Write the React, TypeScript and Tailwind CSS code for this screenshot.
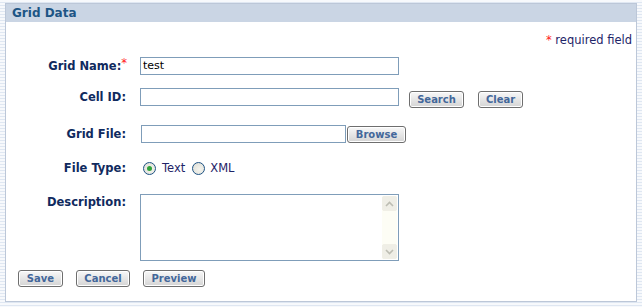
import React from 'react';

const btn =
  'h-[17px] rounded-[3px] border border-[#6e6e6e] bg-[linear-gradient(#f8f8f8,#d4d4d4)] text-[10px] font-bold leading-none text-[#43679a] shadow-[inset_0_0_0_1px_#ffffff]';

const input = 'h-[18px] border border-[#7f9db9] bg-white px-[2px] text-[11px] leading-[16px] text-black';

function Label({ children, required }: { children: React.ReactNode; required?: boolean }) {
  return (
    <div className="w-[121px] shrink-0 text-right text-[11.5px] font-bold leading-[13px] text-[#102a5e]">
      {children}
      {required ? <span className="relative -top-[3px] font-normal text-[#ff2020]">*</span> : <span className="pr-[1px]" />}
    </div>
  );
}

function Radio({ checked }: { checked?: boolean }) {
  return (
    <span className="flex h-[13px] w-[13px] items-center justify-center rounded-full border border-[#1d5283] bg-[radial-gradient(circle_at_60%_60%,#f4f4ee,#dcdcd4)]">
      {checked && <span className="h-[5px] w-[5px] rounded-full bg-[#2fa33a]" />}
    </span>
  );
}

export default function App() {
  return (
    <div className="h-[307px] w-[642px] overflow-hidden bg-[repeating-linear-gradient(#f7f9fc_0_2px,#dfe7f2_2px_3px)] pl-[5px] pt-[3px] font-['DejaVu_Sans',Verdana,sans-serif]">
      <div className="h-[299px] w-[632px] border border-[#bcc7d8] bg-white">
        {/* Header */}
        <div className="h-[18px] bg-[#cad5e4] pl-[6px] text-[12px] font-bold leading-[18px] text-[#1d5585]">
          Grid Data
        </div>

        <div className="flex flex-col">
          <div className="mt-[12px] pr-[4px] text-right text-[11.5px] leading-[13px] text-[#1e2468]">
            <span className="text-[#ff2020]">*</span> required field
          </div>

          {/* Grid Name */}
          <div className="mt-[10px] flex h-[18px] items-center">
            <Label required>Grid Name:</Label>
            <div className={`${input} ml-[13px] w-[259px]`}>test</div>
          </div>

          {/* Cell ID */}
          <div className="mt-[13px] flex h-[20px] items-start">
            <div className="flex h-[18px] items-center">
              <Label>Cell ID:</Label>
            </div>
            <div className={`${input} ml-[13px] w-[259px]`} />
            <button className={`${btn} ml-[10px] mt-[3px] w-[55px]`}>Search</button>
            <button className={`${btn} ml-[14px] mt-[3px] w-[45px]`}>Clear</button>
          </div>

          {/* Grid File */}
          <div className="mt-[17px] flex h-[18px] items-start">
            <div className="flex h-[18px] items-center">
              <Label>Grid File:</Label>
            </div>
            <div className={`${input} ml-[14px] w-[205px]`} />
            <button className={`${btn} ml-[1px] mt-[1px] w-[59px]`}>Browse</button>
          </div>

          {/* File Type */}
          <div className="mt-[18px] flex h-[14px] items-center">
            <Label>File Type:</Label>
            <div className="ml-[16px] flex items-center text-[11.5px] leading-[13px] text-[#1e2468]">
              <Radio checked />
              <span className="ml-[6px]">Text</span>
              <span className="ml-[7px]">
                <Radio />
              </span>
              <span className="ml-[5px]">XML</span>
            </div>
          </div>

          {/* Description */}
          <div className="mt-[19px] flex items-start">
            <div className="pt-[2px]">
              <Label>Description:</Label>
            </div>
            <div className="ml-[13px] flex h-[67px] w-[259px] border border-[#7f9db9] bg-white">
              <div className="flex-1" />
              <div className="my-[1px] mr-[1px] flex w-[15px] flex-col justify-between bg-[#fdfdf5]">
                <div className="flex h-[15px] items-center justify-center rounded-[2px] border border-[#f0efe6] bg-[#efeee6]">
                  <svg width="9" height="6" viewBox="0 0 9 6">
                    <path d="M1 5 L4.5 1.5 L8 5" fill="none" stroke="#bdbdb3" strokeWidth="1.6" />
                  </svg>
                </div>
                <div className="flex h-[15px] items-center justify-center rounded-[2px] border border-[#f0efe6] bg-[#efeee6]">
                  <svg width="9" height="6" viewBox="0 0 9 6">
                    <path d="M1 1 L4.5 4.5 L8 1" fill="none" stroke="#bdbdb3" strokeWidth="1.6" />
                  </svg>
                </div>
              </div>
            </div>
          </div>

          {/* Actions */}
          <div className="mt-[9px] flex pl-[12px]">
            <button className={`${btn} w-[45px]`}>Save</button>
            <button className={`${btn} ml-[13px] w-[54px]`}>Cancel</button>
            <button className={`${btn} ml-[13px] w-[62px]`}>Preview</button>
          </div>
        </div>
      </div>
    </div>
  );
}
